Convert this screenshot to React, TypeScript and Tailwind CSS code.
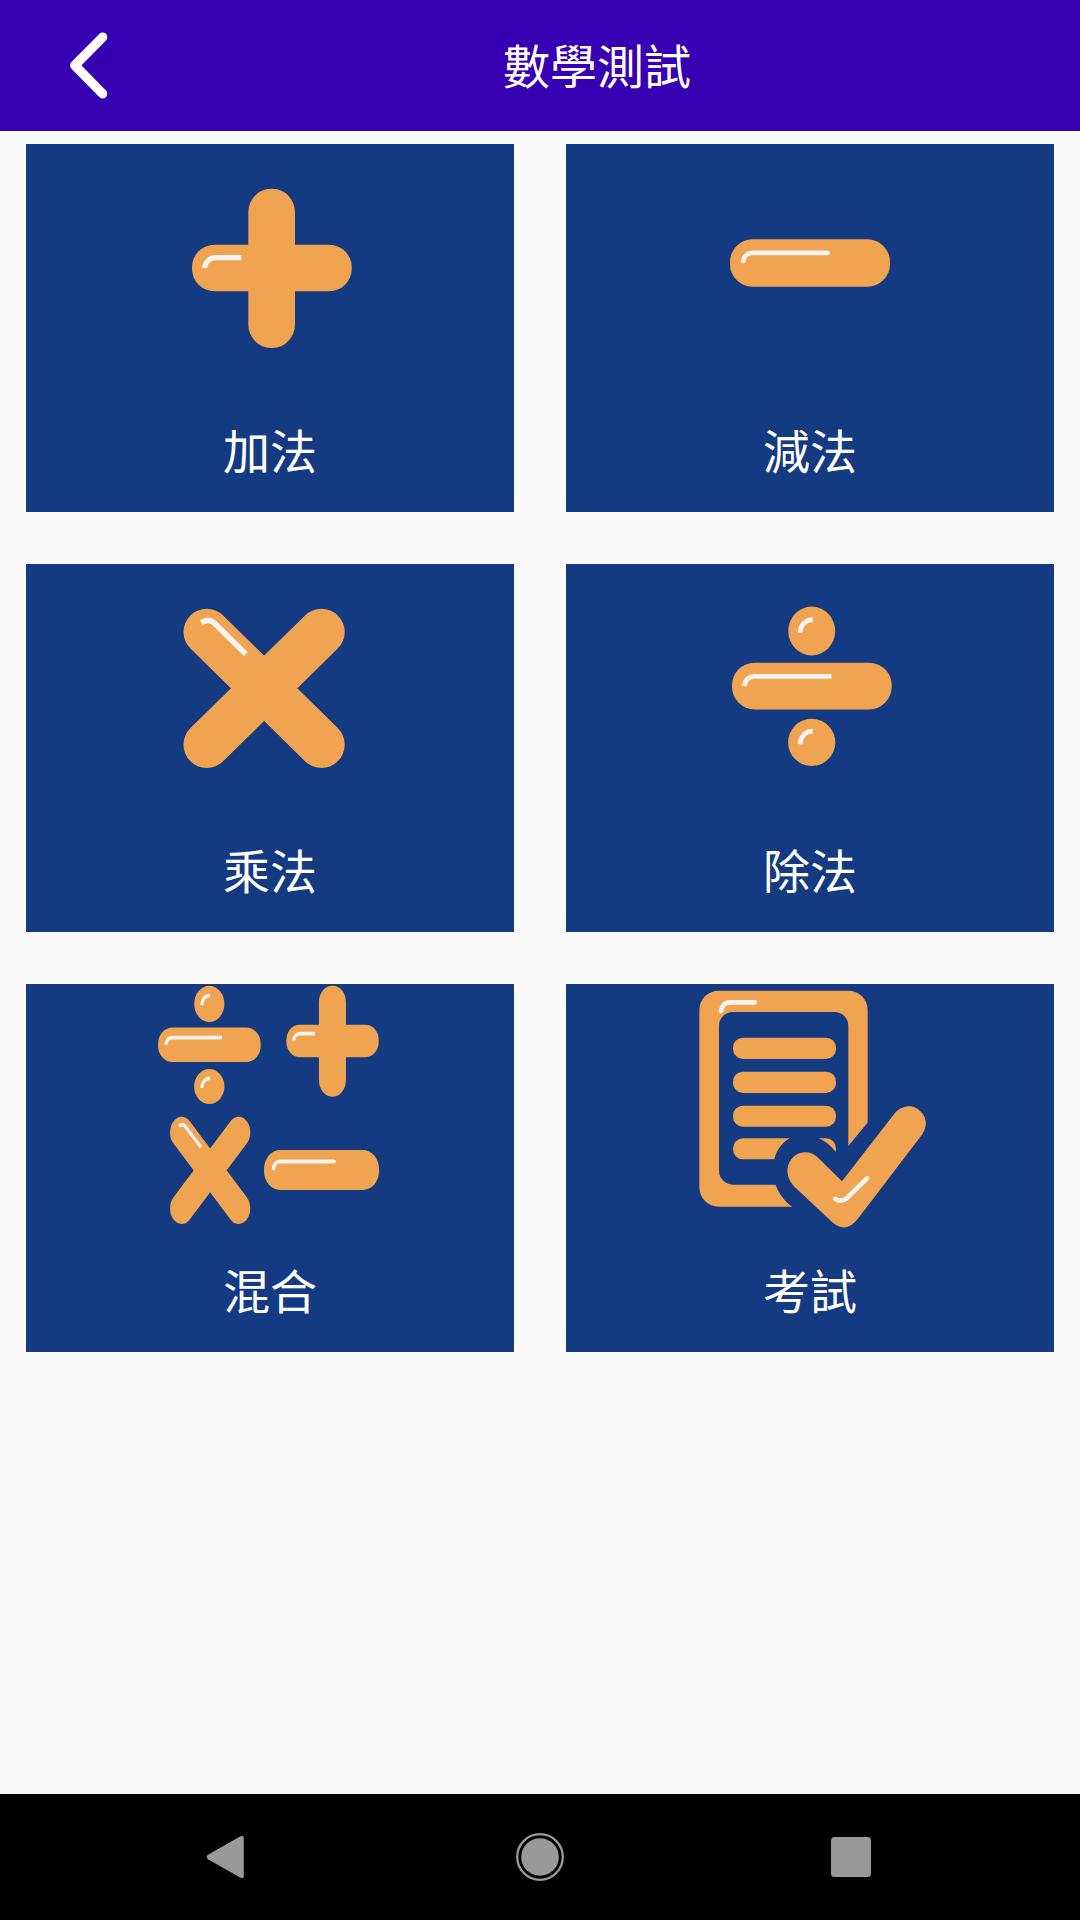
import type { ReactNode } from "react";

const Plus = () => (
  <>
    <rect x="222.3" y="44.7" width="46.7" height="159.3" rx="22.5" ry="24" />
    <rect x="166" y="100.7" width="159.7" height="46.6" rx="22.5" />
    <path className="fill-none stroke-[#f7f3f0] stroke-[5.2]" d="M178.5 124C179.5 117 184.5 113.6 190 113.6H215.2" />
  </>
);

const Minus = () => (
  <>
    <rect x="164" y="95.3" width="160" height="47.4" rx="22.5" />
    <path className="fill-none stroke-[#f7f3f0] stroke-[4.8]" strokeLinecap="round" d="M177.3 117C178 112.5 181.5 108.9 186 108.9H261.5" />
  </>
);

const Cross = () => (
  <>
    <path className="fill-none stroke-[#f0a350] stroke-[46.6]" strokeLinecap="round" d="M180.8 68L295.4 180.7M295.4 68L180.8 180.7" />
    <path className="fill-none stroke-[#f7f3f0] stroke-[5.6]" d="M175.4 58.6C180 55.8 184.5 55.4 188.5 59.3L219.8 90" />
  </>
);

const Divide = () => (
  <>
    <ellipse cx="245.7" cy="67" rx="23.5" ry="24.4" />
    <rect x="166" y="98.7" width="159.7" height="46.7" rx="22.5" />
    <circle cx="245.7" cy="178.4" r="23.6" />
    <g className="fill-none stroke-[#f7f3f0] stroke-[4.8]">
      <path d="M178 121.8C179.5 116 183 112.4 188 112.4H265.5" />
      <path d="M234 68.8C234.8 60.5 239.5 55.7 247 55.6" />
      <path d="M234 180.3C234.8 172 239.5 167.2 247 167.1" />
    </g>
  </>
);

const Mixed = () => (
  <>
    <g transform="translate(25.3 -29.8) scale(.643 .742)"><Divide /></g>
    <g transform="translate(164.3 -29.5) scale(.5786 .697)"><Plus /></g>
    <g transform="translate(65.7 102.6) scale(.4975 .6736)"><Cross /></g>
    <g transform="translate(120.1 85.6) scale(.719 .844)"><Minus /></g>
  </>
);

const Exam = () => (
  <g transform="translate(114 -14) scale(.33333)">
    <rect x="58" y="62" width="505" height="648" rx="58" />
    <rect className="fill-[#143a82]" x="117" y="126" width="388" height="518" rx="42" />
    <rect x="159" y="203" width="309" height="64" rx="30" />
    <rect x="159" y="305" width="309" height="64" rx="30" />
    <rect x="159" y="407" width="309" height="63" rx="30" />
    <rect x="159" y="505" width="309" height="63" rx="30" />
    <path className="fill-[#143a82]" d="M505 528L565 455L600 457V760H400L338 712C312 692 295 668 287 644L283 568C290 540 305 520 328 505C355 488 390 488 417 505C438 514 455 530 468 547Z" />
    <path d="M486 634L640 435C665 403 700 402 721 424C742 444 742 470 727 493L540 738C512 778 485 781 457 757L345 652C319 627 315 590 335 566C355 543 390 540 412 561Z" />
    <g className="fill-none stroke-[#f7f3f0] stroke-[14]" strokeLinecap="round">
      <path d="M123 123C125 107 135 97 150 97H224" />
      <path d="M466 687C478 694 490 693 500 685L561 625" />
    </g>
  </g>
);

const modes: { label: string; icon: ReactNode }[] = [
  { label: "加法", icon: <Plus /> },
  { label: "減法", icon: <Minus /> },
  { label: "乘法", icon: <Cross /> },
  { label: "除法", icon: <Divide /> },
  { label: "混合", icon: <Mixed /> },
  { label: "考試", icon: <Exam /> },
];

const Header = () => {
  return (
    <header className="flex h-[131px] items-center bg-[#3700b3] text-white">
      <button className="h-[131px] w-[114px]" aria-label="返回">
        <svg className="h-[131px] w-[114px] fill-none stroke-white stroke-[9.4]" viewBox="0 0 114 131" strokeLinecap="round" strokeLinejoin="round">
          <path d="M102.6 37.2L74.8 65.4L102.6 93.8" />
        </svg>
      </button>
      <h1 className="flex-1 pb-[3px] text-center text-[47px] leading-[70px]">數學測試</h1>
    </header>
  );
};

const ModeCard = ({ label, icon }: { label: string; icon: ReactNode }) => {
  return (
    <button className="flex h-[368px] flex-col bg-[#143a82]">
      <svg className="h-[270px] w-[488px] fill-[#f0a350]" viewBox="0 0 488 270">
        {icon}
      </svg>
      <span className="w-full text-center text-[47px] leading-[70px] text-white">{label}</span>
    </button>
  );
};

const NavigationBar = () => {
  return (
    <nav className="h-[126px] bg-black">
      <svg className="h-[126px] w-[1080px] fill-[#999]" viewBox="0 0 1080 126">
        <path d="M208 60.8L240 42.4Q243.8 40.5 243.8 44.5V81.5Q243.8 85.5 240 83.6L208 65.2Q205.4 63 208 60.8Z" />
        <circle cx="540" cy="63" r="22.8" className="fill-none stroke-[#999] stroke-[2.3]" />
        <circle cx="540" cy="63" r="18.8" />
        <rect x="831" y="43" width="40" height="40" rx="3.5" />
      </svg>
    </nav>
  );
};

export default function App() {
  return (
    <div className="flex h-[1920px] w-[1080px] flex-col bg-[#fafafa] font-['Noto_Sans_CJK_TC',sans-serif]">
      <Header />
      <main className="grid flex-1 grid-cols-2 content-start gap-[52px] px-[26px] pt-[13px]">
        {modes.map((mode) => (
          <ModeCard key={mode.label} label={mode.label} icon={mode.icon} />
        ))}
      </main>
      <NavigationBar />
    </div>
  );
}
